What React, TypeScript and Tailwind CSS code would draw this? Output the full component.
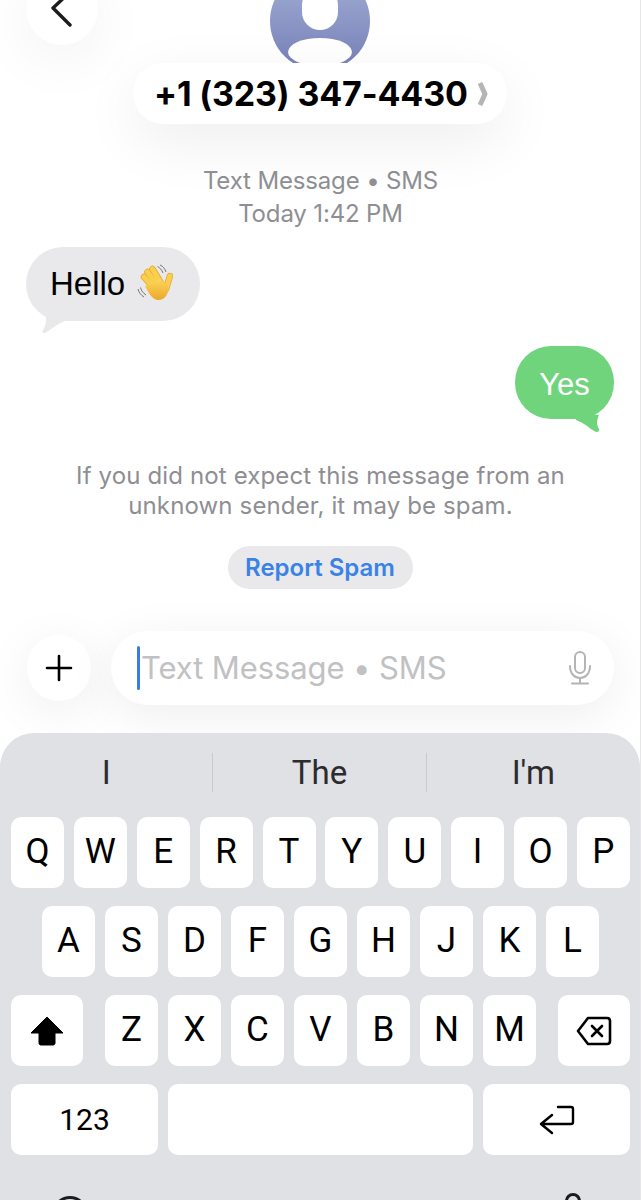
const sans = "font-['Inter','Liberation_Sans',sans-serif]";

const rows = [
  ["Q", "W", "E", "R", "T", "Y", "U", "I", "O", "P"],
  ["A", "S", "D", "F", "G", "H", "J", "K", "L"],
  ["Z", "X", "C", "V", "B", "N", "M"],
];

function Key({ label }: { label: string }) {
  return (
    <div className="w-[53px] h-[71px] rounded-[10px] bg-white flex items-center justify-center pb-[1px] text-[35px] text-black font-['Roboto',sans-serif]">
      {label}
    </div>
  );
}

function WaveHand() {
  return (
    <svg width="36" height="38" viewBox="0 0 36 38" className="ml-[12px] mt-[-3px]">
      <defs>
        <linearGradient id="hand" x1="0" y1="0" x2="0" y2="1">
          <stop offset="0" stopColor="#fbd75b" />
          <stop offset="1" stopColor="#eda72a" />
        </linearGradient>
      </defs>
      {/* fingers */}
      <g stroke="#e5a530" strokeWidth="6.500" strokeLinecap="round">
        <path d="M7 13 L17 24 M10.500 8 L20 21 M15.500 5 L24 19 M33 12 L29 25" />
      </g>
      <g stroke="#f9cf4e" strokeWidth="5" strokeLinecap="round">
        <path d="M7 13 L17 24 M10.500 8 L20 21 M15.500 5 L24 19 M33 12 L29 25" />
      </g>
      {/* palm */}
      <path d="M11 21 L23 15 L31 21 C33 29 28 37 20 36 C15 35 11 28 8 22 Z" fill="url(#hand)" />
      {/* motion lines */}
      <path d="M23 1 C26 2 28 5 29 8 M20.500 2.500 C23 4 25 6 26 9 M1 25 C2 29 4 31 7 33 M3.500 23.500 C4.500 27 6 29 9 31" fill="none" stroke="#77777c" strokeWidth="1" />
    </svg>
  );
}

export default function App() {
  return (
    <div className={`w-[641px] h-[1200px] overflow-hidden bg-white flex flex-col border-r border-[#e6e6e6] ${sans}`}>
      {/* Header */}
      <div className="grid grid-cols-[133px_374px_1fr] shrink-0">
        <div>
          <div className="ml-[26px] -mt-[27px] w-[72px] h-[72px] rounded-full bg-white shadow-[0_14px_60px_rgba(0,0,0,0.06)] flex items-center justify-center">
            <svg width="24" height="40" viewBox="0 0 24 40" className="mt-[-1px] mr-[3px]">
              <path d="M21 3 L4 19 L21 36" fill="none" stroke="#1c1c1e" strokeWidth="3.400" strokeLinecap="round" strokeLinejoin="round" />
            </svg>
          </div>
        </div>
        <div className="flex flex-col items-center">
          <div className="-mt-[29px] w-[100px] h-[100px] shrink-0 rounded-full bg-gradient-to-b from-[#a3aed4] to-[#7680b8] overflow-hidden flex flex-col items-center">
            <div className="mt-[16px] w-[36px] h-[43px] shrink-0 rounded-full bg-white" />
            <div className="mt-[8px] w-[64px] h-[28px] shrink-0 rounded-[50%] bg-white" />
          </div>
          <div className="-mt-[8px] w-[374px] h-[61px] shrink-0 rounded-full bg-white shadow-[0_18px_60px_rgba(0,0,0,0.07)] flex items-center pl-[21px] gap-[9px]">
            <span className="text-[34px] font-bold text-black whitespace-nowrap tracking-[-0.15px]">+1 (323) 347-4430</span>
            <svg width="12" height="28" viewBox="0 0 12 28">
              <path d="M3 3 L8 14 L3 25" fill="none" stroke="#b5b5b7" strokeWidth="5" strokeLinejoin="round" />
            </svg>
          </div>
        </div>
        <div />
      </div>

      {/* Conversation */}
      <div className="mt-[40px] pl-[1px] shrink-0 text-center text-[#8e8e93] text-[24px] leading-[33px] tracking-[-0.15px]">
        <div>Text Message • SMS</div>
        <div>Today 1:42 PM</div>
      </div>

      <div className="mt-[17px] ml-[26px] self-start relative h-[74px] w-[174px] shrink-0 rounded-[37px] bg-[#e9e9eb] flex items-center pl-[24px] text-[33px] text-black font-['Liberation_Sans',sans-serif]">
        Hello
        <WaveHand />
        <svg width="30" height="22" viewBox="0 0 30 22" className="absolute left-[12px] top-[66px]">
          <path d="M7 0 C9 6 8 13 5 17 C3 20 6 20.500 8 19.500 C14 16 19 11 27 8 L27 0 Z" fill="#e9e9eb" />
        </svg>
      </div>

      <div className="mt-[25px] mr-[26px] self-end relative h-[73px] w-[99px] shrink-0 rounded-[36px] bg-[#6fd47c] flex items-center justify-center pt-[5px] text-[31px] text-white font-['Liberation_Sans',sans-serif]">
        Yes
        <svg width="30" height="22" viewBox="0 0 30 22" className="absolute right-[12px] top-[66px]">
          <path d="M27 3 C25 8 24 12 27 17 C28 20 25 20.500 23 19.500 C17 16 12 11 4 8 L4 0 Z" fill="#6fd47c" />
        </svg>
      </div>

      <div className="mt-[42px] pl-[1px] shrink-0 text-center text-[#8e8e93] text-[24px] leading-[30px] tracking-[0.14px]">
        <div>If you did not expect this message from an</div>
        <div>unknown sender, it may be spam.</div>
      </div>

      <div className="mt-[25px] self-center w-[185px] h-[43px] shrink-0 rounded-full bg-[#e9e9eb] flex items-center justify-center text-[#3a82e6] text-[24px] font-semibold">
        Report Spam
      </div>

      {/* Input row */}
      <div className="mt-[42px] ml-[27px] mr-[26px] shrink-0 flex items-center gap-[20px]">
        <div className="w-[64px] h-[66px] rounded-full bg-white shadow-[0_10px_50px_rgba(0,0,0,0.07)] flex items-center justify-center shrink-0">
          <svg width="28" height="28" viewBox="0 0 28 28">
            <path d="M14 2 V26 M2 14 H26" stroke="#000" strokeWidth="2.600" strokeLinecap="round" />
          </svg>
        </div>
        <div className="flex-1 h-[74px] rounded-full bg-white shadow-[0_10px_50px_rgba(0,0,0,0.07)] flex items-center pl-[26px] pr-[22px]">
          <div className="w-[3px] h-[44px] rounded-full bg-[#3a7de0] shrink-0" />
          <span className="ml-[1px] text-[31px] text-[#c1c1c3] flex-1 tracking-[-0.1px]">Text Message • SMS</span>
          <svg width="24" height="34" viewBox="0 0 24 34">
            <rect x="7" y="1" width="10" height="21" rx="5" fill="none" stroke="#b4b4b7" strokeWidth="2" />
            <path d="M2 15 C 2 23 7 27 12 27 C 17 27 22 23 22 15 M12 27 V32 M4 32.500 H20" fill="none" stroke="#b4b4b7" strokeWidth="2" strokeLinecap="round" />
          </svg>
        </div>
      </div>

      {/* Keyboard */}
      <div className="mt-[28px] h-[467px] shrink-0 rounded-t-[34px] bg-[#e0e1e5] pl-[11px] pr-[10px]">
        <div className="h-[84px] pt-[20px] grid grid-cols-3 items-start text-center text-[33px] text-[#2c2c2e] font-['Roboto',sans-serif] -ml-[11px] -mr-[10px]">
          <div className="h-[39px] border-r border-[#c9cacd] leading-[39px]">I</div>
          <div className="h-[39px] border-r border-[#c9cacd] leading-[39px]">The</div>
          <div className="h-[39px] leading-[39px]">I'm</div>
        </div>
        <div className="flex flex-col gap-[18px]">
          <div className="flex justify-between">
            {rows[0].map((k) => (
              <Key key={k} label={k} />
            ))}
          </div>
          <div className="flex justify-between px-[31px]">
            {rows[1].map((k) => (
              <Key key={k} label={k} />
            ))}
          </div>
          <div className="flex justify-between">
            <div className="w-[72px] h-[71px] rounded-[10px] bg-white flex items-center justify-center">
              <svg width="34" height="30" viewBox="0 0 34 30">
                <path d="M17 1 L33 17 H25 V27 C25 28.500 24 29 23 29 H11 C10 29 9 28.500 9 27 V17 H1 Z" fill="#000" stroke="#000" strokeWidth="1" strokeLinejoin="round" />
              </svg>
            </div>
            <div className="flex gap-[10px]">
              {rows[2].map((k) => (
                <Key key={k} label={k} />
              ))}
            </div>
            <div className="w-[72px] h-[71px] rounded-[10px] bg-white flex items-center justify-center">
              <svg width="36" height="30" viewBox="0 0 36 30">
                <path d="M12 2 H31 C33 2 34 3 34 5 V25 C34 27 33 28 31 28 H12 L2 15 Z" fill="none" stroke="#000" strokeWidth="2.600" strokeLinejoin="round" />
                <path d="M16 10 L26 20 M26 10 L16 20" stroke="#000" strokeWidth="2.600" strokeLinecap="round" />
              </svg>
            </div>
          </div>
          <div className="flex gap-[10px]">
            <div className="w-[147px] h-[71px] rounded-[10px] bg-white flex items-center justify-center text-[30px] text-black font-['Roboto',sans-serif]">123</div>
            <div className="flex-1 h-[71px] rounded-[10px] bg-white" />
            <div className="w-[147px] h-[71px] rounded-[10px] bg-white flex items-center justify-center">
              <svg width="36" height="30" viewBox="0 0 36 30">
                <path d="M19 2 H32 C33.500 2 34 2.500 34 4 V17 C34 18.500 33.500 19 32 19 H2 M13 10 L2 19 L13 28" fill="none" stroke="#000" strokeWidth="2.400" strokeLinecap="round" strokeLinejoin="round" />
              </svg>
            </div>
          </div>
        </div>
        <div className="mt-[38px] flex justify-between items-start pl-[41px] pr-[49px]">
          <div className="mt-[3px] w-[36px] h-[36px] rounded-full border-[3px] border-[#1c1c1e]" />
          <div className="w-[16px] h-[26px] rounded-full border-[3px] border-[#1c1c1e]" />
        </div>
      </div>
    </div>
  );
}
